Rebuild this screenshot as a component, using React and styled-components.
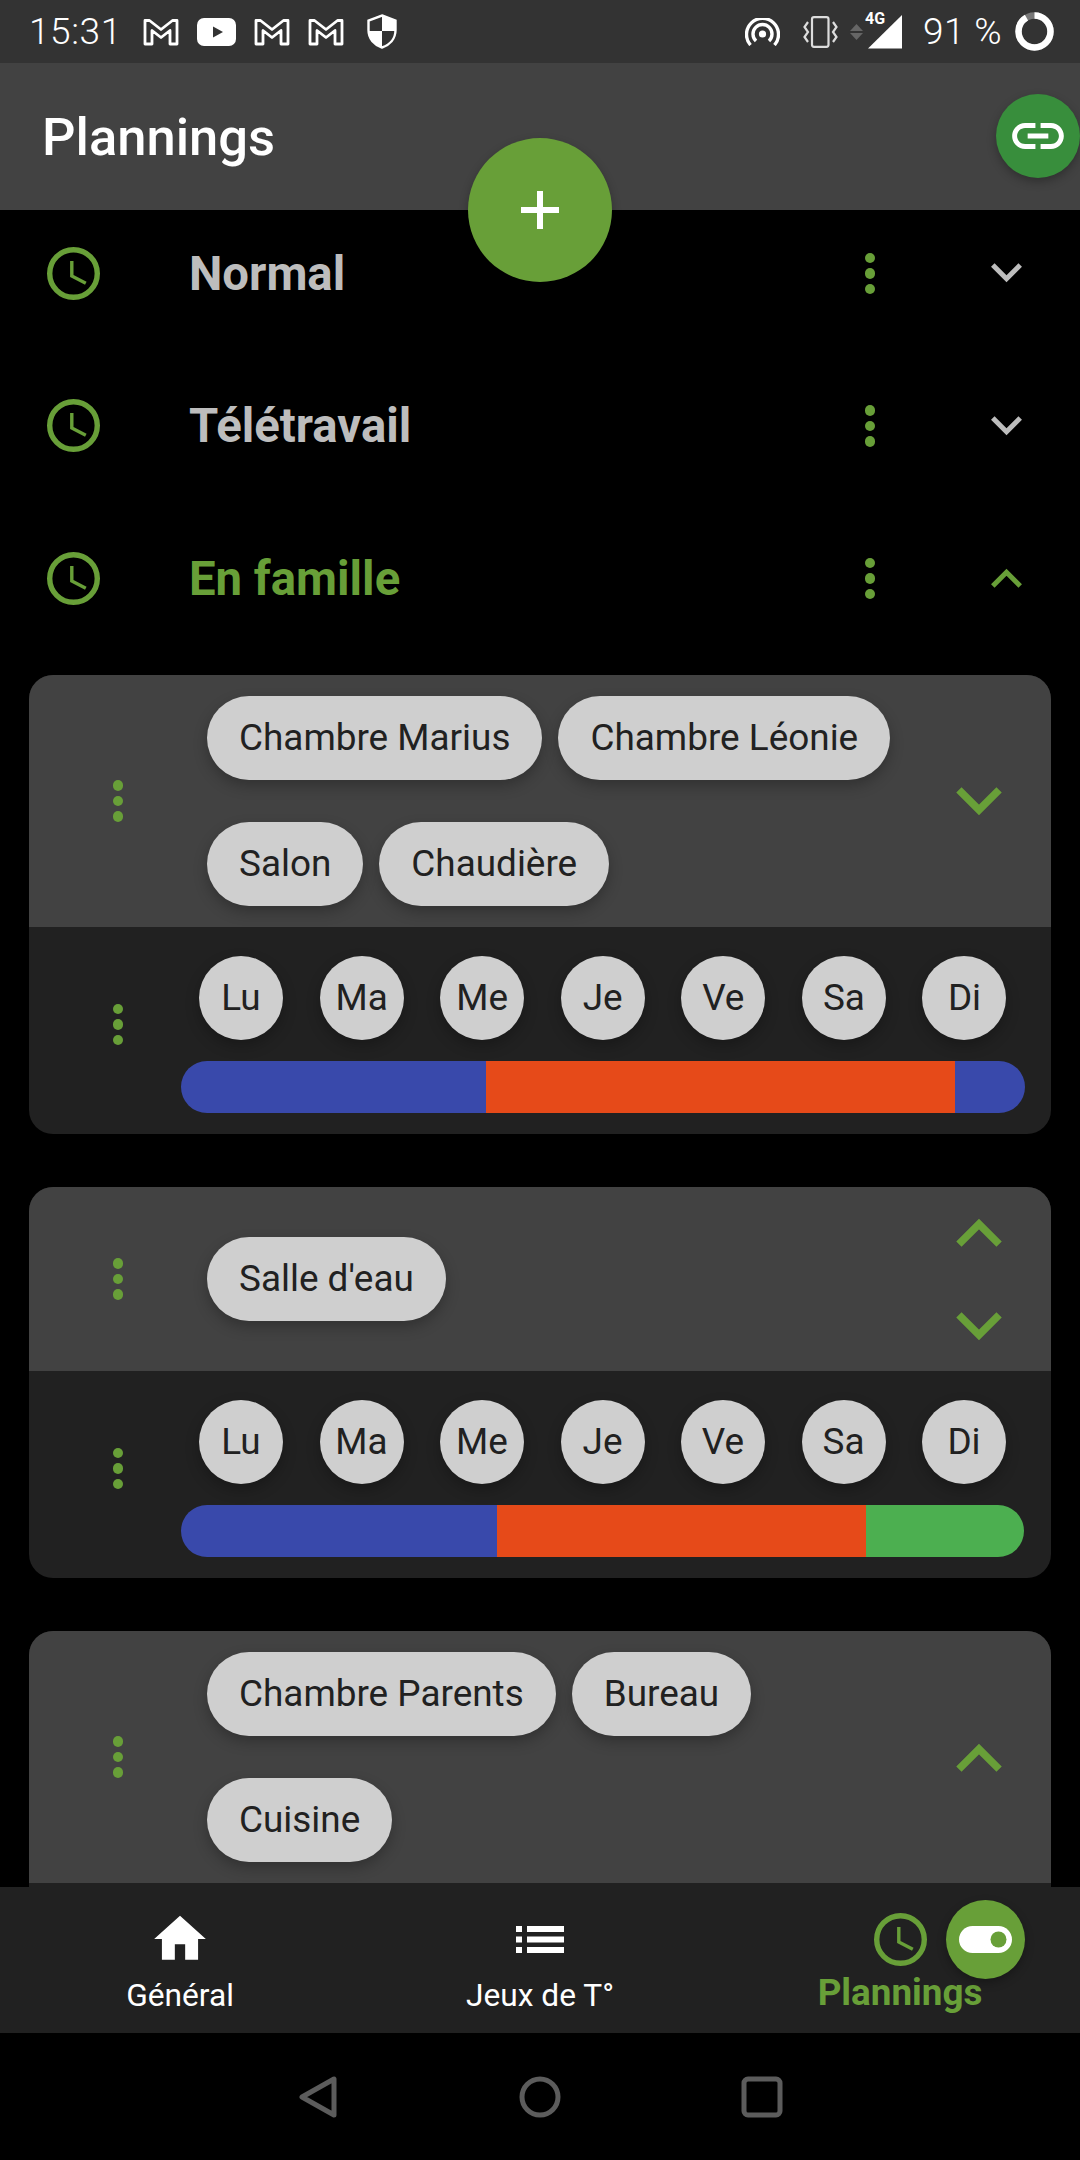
import React from 'react';
import styled, { createGlobalStyle } from 'styled-components';

const GREEN = '#689f38';

const GlobalStyle = createGlobalStyle`
  html, body { margin: 0; padding: 0; background: #000; }
  * { box-sizing: border-box; }
`;

const Page = styled.div`
  position: relative;
  width: 1080px;
  height: 2160px;
  overflow: hidden;
  display: flex;
  flex-direction: column;
  background: #000;
  font-family: Roboto, "Noto Sans", sans-serif;
`;

/* status bar */
const StatusBar = styled.div`
  height: 63px;
  flex: none;
  background: #333;
  color: #fff;
  display: flex;
  align-items: center;
  justify-content: space-between;
  padding: 0 26px 0 29px;
  font-weight: 300;
  font-size: 37px;
`;

const StatusGroup = styled.div`
  display: flex;
  align-items: center;
  gap: ${p => p.$gap || 18}px;
`;

const StatusText = styled.span`
  margin-right: ${p => p.$mr || 0}px;
  line-height: 1;
  letter-spacing: ${p => p.$ls || 0}px;
`;

const Svg = styled.svg`
  display: block;
  flex: none;
  margin-left: ${p => p.$ml || 0}px;
  margin-right: ${p => p.$mr || 0}px;
  transform: ${p => (p.$flip ? 'rotate(180deg)' : 'none')};
`;

const SignalBox = styled.div`
  position: relative;
  width: 36px;
  height: 36px;
  margin: 0 5px 0 -11px;
`;

const NetLabel = styled.span`
  position: absolute;
  left: -2px;
  top: -3px;
  font-size: 16px;
  line-height: 16px;
  font-weight: 700;
`;

/* app bar */
const AppBar = styled.header`
  height: 147px;
  flex: none;
  background: #424242;
  display: flex;
  align-items: center;
  padding-left: 42px;
  position: relative;
  z-index: 2;
`;

const Title = styled.h1`
  margin: 0;
  font-size: 52.5px;
  font-weight: 500;
  color: #fff;
`;

const Fab = styled.div`
  position: absolute;
  border-radius: 50%;
  display: flex;
  align-items: center;
  justify-content: center;
  background: ${p => p.$bg || GREEN};
  left: ${p => p.$x}px;
  top: ${p => p.$y}px;
  width: ${p => p.$size}px;
  height: ${p => p.$size}px;
  box-shadow: 0 4px 10px rgba(0, 0, 0, 0.28);
  z-index: 3;
`;

/* scrolling content */
const Main = styled.main`
  height: 1677px;
  flex: none;
  overflow: hidden;
`;

const List = styled.div`
  margin-top: -13px;
`;

const Row = styled.div`
  height: 152.5px;
  display: flex;
  align-items: center;
`;

const RowIcon = styled.div`
  width: 189px;
  padding-left: 47px;
  flex: none;
`;

const RowTitle = styled.div`
  flex: 1;
  padding-top: 1px;
  font-size: 47.3px;
  font-weight: 700;
  color: ${p => (p.$active ? GREEN : '#bdbdbd')};
`;

const DotsCell = styled.div`
  flex: none;
  box-sizing: content-box;
  width: ${p => p.$w}px;
  padding-left: ${p => p.$pl || 0}px;
  display: flex;
  justify-content: center;
`;

const ChevronCell = styled.div`
  flex: none;
  width: ${p => p.$w}px;
  display: flex;
  flex-direction: column;
  align-items: center;
  gap: ${p => p.$gap || 0}px;
`;

const Dots = styled.div`
  display: flex;
  flex-direction: column;
  gap: 5px;
  margin-bottom: ${p => p.$mb || 0}px;
  span {
    width: 10.5px;
    height: 10.5px;
    border-radius: 50%;
    background: ${GREEN};
  }
`;

const Card = styled.section`
  margin: 20.5px 29px 53px;
  border-radius: 24px;
  overflow: hidden;
  background: #212121;
  & + & {
    margin-top: 0;
  }
`;

const CardTop = styled.div`
  background: #424242;
  min-height: 184px;
  display: flex;
  align-items: center;
`;

const Chips = styled.div`
  flex: 1;
  display: flex;
  flex-wrap: wrap;
  gap: 42px 16px;
  padding: 21px 0;
`;

const Chip = styled.div`
  height: 84px;
  padding: 0 32px;
  border-radius: 42px;
  background: #cfcfcf;
  color: #212121;
  font-size: 36.9px;
  font-weight: 430;
  line-height: 84px;
  box-shadow: 0 6px 14px rgba(0, 0, 0, 0.25);
`;

const CardBottom = styled.div`
  display: flex;
  align-items: center;
  padding: 29px 27px 21px 0;
`;

const Schedule = styled.div`
  flex: 1;
`;

const Days = styled.div`
  display: flex;
  justify-content: space-between;
  padding: 0 18px;
  margin-bottom: 21px;
`;

const Day = styled.div`
  width: 84px;
  height: 84px;
  border-radius: 50%;
  background: #cfcfcf;
  color: #212121;
  font-size: 36.9px;
  font-weight: 430;
  line-height: 84px;
  text-align: center;
  box-shadow: 0 6px 14px rgba(0, 0, 0, 0.25);
`;

const Bar = styled.div`
  height: 52px;
  border-radius: 26px;
  overflow: hidden;
  display: flex;
`;

const Segment = styled.div`
  background: ${p => p.$color};
`;

/* bottom navigation */
const BottomNav = styled.nav`
  position: relative;
  height: 146px;
  flex: none;
  background: #212121;
  display: grid;
  grid-template-columns: repeat(3, 360px);
  z-index: 2;
`;

const NavItem = styled.div`
  display: flex;
  flex-direction: column;
  align-items: center;
  padding-top: ${p => (p.$active ? 26 : 21)}px;
  color: ${p => (p.$active ? GREEN : '#fff')};
`;

const NavIcon = styled.div`
  height: ${p => (p.$active ? 52 : 62)}px;
  display: flex;
  align-items: center;
`;

const NavLabel = styled.span`
  font-size: ${p => (p.$active ? 36.8 : 31.7)}px;
  font-weight: ${p => (p.$active ? 700 : 400)};
  line-height: 40px;
  margin-top: ${p => (p.$active ? 8 : 6)}px;
`;

/* android buttons */
const SystemNav = styled.div`
  flex: 1;
  display: grid;
  grid-template-columns: repeat(3, 222px);
  justify-content: center;
  align-items: center;
  justify-items: center;
`;

const Clock = ({ size = 53 }) => (
  <Svg width={size} height={size} viewBox="0 0 53 53" fill="none" stroke={GREEN}>
    <circle cx="26.5" cy="26.5" r="23.8" strokeWidth="5.4" />
    <path d="M24.8 14V29L38.8 36.2" strokeWidth="3.4" />
  </Svg>
);

const Chevron = ({ up, big, color }) =>
  big ? (
    <Svg width="46" height="29" viewBox="0 0 46 29" fill="none" stroke={color} strokeWidth="7.5" $flip={up}>
      <path d="M2.9 2.9L23 23L43.1 2.9" />
    </Svg>
  ) : (
    <Svg width="31" height="20" viewBox="0 0 31 20" fill="none" stroke={color} strokeWidth="5" $flip={up}>
      <path d="M1.8 2L15.5 15.7L29.2 2" />
    </Svg>
  );

const MenuDots = ({ mb }) => (
  <Dots $mb={mb}>
    <span />
    <span />
    <span />
  </Dots>
);

const GmailIcon = () => (
  <Svg width="36" height="28" viewBox="0 0 36 28" fill="none" stroke="#fff" strokeWidth="2.8" strokeLinejoin="round">
    <path d="M2 2.5H6.5L18 11.5L29.5 2.5H34V26H27V12.5L18 19.5L9 12.5V26H2Z" />
  </Svg>
);

const YoutubeIcon = () => (
  <Svg width="39" height="28" viewBox="0 0 39 28">
    <rect width="39" height="28" rx="7" fill="#fff" />
    <path d="M16 8.5L26 14L16 19.5Z" fill="#333" />
  </Svg>
);

const ShieldIcon = () => (
  <Svg width="30" height="35" viewBox="0 0 30 35" $ml={5}>
    <path d="M15 1.5L28.5 6.5V16C28.5 25 22.5 31 15 33.5C7.5 31 1.5 25 1.5 16V6.5Z" fill="none" stroke="#fff" strokeWidth="2.4" />
    <path d="M15 1.5L28.5 6.5V17H15Z" fill="#fff" />
    <path d="M15 17H1.5C1.5 25 7.5 31 15 33.5Z" fill="#fff" />
  </Svg>
);

const HotspotIcon = () => (
  <Svg width="35" height="28" viewBox="0 0 35 28" fill="none" stroke="#fff" strokeWidth="3.4" $mr={8}>
    <circle cx="17.5" cy="16" r="3.6" fill="#fff" stroke="none" />
    <path d="M11 23A9.5 9.5 0 1 1 24 23" />
    <path d="M5.5 27A16 16 0 1 1 29.5 27" />
  </Svg>
);

const VibrateIcon = () => (
  <Svg width="35" height="32" viewBox="0 0 35 32" fill="none" stroke="#ddd" strokeWidth="2.2">
    <rect x="9" y="1.2" width="16.5" height="29.6" rx="2" />
    <path d="M5 6L1.5 11L5 16L1.5 21L5 26" />
    <path d="M30 6L33.5 11L30 16L33.5 21L30 26" />
  </Svg>
);

const ArrowsIcon = () => (
  <Svg width="13" height="16" viewBox="0 0 13 16" fill="#666" $ml={-3}>
    <path d="M6.5 0L13 7H0Z" />
    <path d="M6.5 16L13 9H0Z" />
  </Svg>
);

const BatteryIcon = () => (
  <Svg width="39" height="39" viewBox="0 0 39 39" fill="none" strokeWidth="6.5">
    <circle cx="19.5" cy="19.5" r="16" stroke="#777" />
    <circle cx="19.5" cy="19.5" r="16" stroke="#fff" strokeDasharray="91.5 100.5" transform="rotate(-90 19.5 19.5)" />
  </Svg>
);

const rooms = [
  { names: ['Chambre Marius', 'Chambre Léonie', 'Salon', 'Chaudière'], down: true, bar: [[304.5, '#3949ab'], [469, '#e64a19'], [70, '#3949ab']] },
  { names: ["Salle d'eau"], up: true, down: true, bar: [[316, '#3949ab'], [369, '#e64a19'], [158, '#4caf50']] },
  { names: ['Chambre Parents', 'Bureau', 'Cuisine'], up: true, bar: [[316, '#3949ab'], [369, '#e64a19'], [158, '#4caf50']] },
];

const days = ['Lu', 'Ma', 'Me', 'Je', 'Ve', 'Sa', 'Di'];
const plannings = ['Normal', 'Télétravail', 'En famille'];

export default function App() {
  return (
    <Page>
      <GlobalStyle />
      <StatusBar>
        <StatusGroup>
          <StatusText $mr={3} $ls={0.6}>15:31</StatusText>
          <GmailIcon />
          <YoutubeIcon />
          <GmailIcon />
          <GmailIcon />
          <ShieldIcon />
        </StatusGroup>
        <StatusGroup $gap={15}>
          <HotspotIcon />
          <VibrateIcon />
          <ArrowsIcon />
          <SignalBox>
            <NetLabel>4G</NetLabel>
            <Svg width="36" height="36" viewBox="0 0 36 36">
              <path d="M35 1V34.5H1Z" fill="#fff" />
            </Svg>
          </SignalBox>
          <StatusText $mr={-2} $ls={0.4}>91 %</StatusText>
          <BatteryIcon />
        </StatusGroup>
      </StatusBar>

      <AppBar>
        <Title>Plannings</Title>
      </AppBar>

      <Fab $x={468} $y={138} $size={144}>
        <Svg width="38" height="38" viewBox="0 0 38 38" fill="#fff">
          <rect x="16" width="6" height="38" />
          <rect y="16" width="38" height="6" />
        </Svg>
      </Fab>
      <Fab $x={996} $y={94} $size={84} $bg="#388e3c">
        <Svg width="62" height="62" viewBox="0 0 24 24" fill="#fff">
          <path d="M3.9 12c0-1.71 1.39-3.1 3.1-3.1h4V7H7c-2.76 0-5 2.24-5 5s2.24 5 5 5h4v-1.9H7c-1.71 0-3.1-1.39-3.1-3.1zM8 13h8v-2H8v2zm9-6h-4v1.9h4c1.71 0 3.1 1.39 3.1 3.1s-1.39 3.1-3.1 3.1h-4V17h4c2.76 0 5-2.24 5-5s-2.24-5-5-5z" />
        </Svg>
      </Fab>

      <Main>
        <List>
          {plannings.map((name, i) => {
            const active = i === 2;
            return (
              <Row key={name}>
                <RowIcon>
                  <Clock />
                </RowIcon>
                <RowTitle $active={active}>{name}</RowTitle>
                <DotsCell $w={126}>
                  <MenuDots />
                </DotsCell>
                <ChevronCell $w={147}>
                  <Chevron up={active} color={active ? GREEN : '#bdbdbd'} />
                </ChevronCell>
              </Row>
            );
          })}
        </List>

        {rooms.map(room => (
          <Card key={room.names[0]}>
            <CardTop>
              <DotsCell $w={178}>
                <MenuDots />
              </DotsCell>
              <Chips>
                {room.names.map(n => (
                  <Chip key={n}>{n}</Chip>
                ))}
              </Chips>
              <ChevronCell $w={144} $gap={65}>
                {room.up && <Chevron big up color={GREEN} />}
                {room.down && <Chevron big color={GREEN} />}
              </ChevronCell>
            </CardTop>
            <CardBottom>
              <DotsCell $w={126} $pl={26}>
                <MenuDots mb={20} />
              </DotsCell>
              <Schedule>
                <Days>
                  {days.map(d => (
                    <Day key={d}>{d}</Day>
                  ))}
                </Days>
                <Bar>
                  {room.bar.map(([w, color], i) => (
                    <Segment key={i} $color={color} style={{ width: w }} />
                  ))}
                </Bar>
              </Schedule>
            </CardBottom>
          </Card>
        ))}
      </Main>

      <BottomNav>
        <NavItem>
          <NavIcon>
            <Svg width="62" height="62" viewBox="0 0 24 24" fill="#fff">
              <path d="M10 20v-6h4v6h5v-8h3L12 3 2 12h3v8z" />
            </Svg>
          </NavIcon>
          <NavLabel>Général</NavLabel>
        </NavItem>
        <NavItem>
          <NavIcon>
            <Svg width="48" height="27" viewBox="0 0 48 27" fill="#fff">
              <rect width="6" height="6" />
              <rect y="10.5" width="6" height="6" />
              <rect y="21" width="6" height="6" />
              <rect x="11" width="37" height="6" />
              <rect x="11" y="10.5" width="37" height="6" />
              <rect x="11" y="21" width="37" height="6" />
            </Svg>
          </NavIcon>
          <NavLabel>Jeux de T°</NavLabel>
        </NavItem>
        <NavItem $active>
          <NavIcon $active>
            <Clock />
          </NavIcon>
          <NavLabel $active>Plannings</NavLabel>
        </NavItem>
        <Fab $x={946} $y={13} $size={79}>
          <Svg width="53" height="27" viewBox="0 0 53 27">
            <rect width="53" height="27" rx="13.5" fill="#fff" />
            <circle cx="39.5" cy="13.5" r="8" fill={GREEN} />
          </Svg>
        </Fab>
      </BottomNav>

      <SystemNav>
        <Svg width="44" height="42" viewBox="0 0 44 42" fill="none" stroke="#5c5c5c" strokeWidth="5" strokeLinejoin="round">
          <path d="M38 3V39L6 21Z" />
        </Svg>
        <Svg width="42" height="42" viewBox="0 0 42 42" fill="none" stroke="#5c5c5c" strokeWidth="5">
          <circle cx="21" cy="21" r="18" />
        </Svg>
        <Svg width="42" height="42" viewBox="0 0 42 42" fill="none" stroke="#5c5c5c" strokeWidth="5">
          <rect x="3" y="3" width="36" height="36" rx="4" />
        </Svg>
      </SystemNav>
    </Page>
  );
}
